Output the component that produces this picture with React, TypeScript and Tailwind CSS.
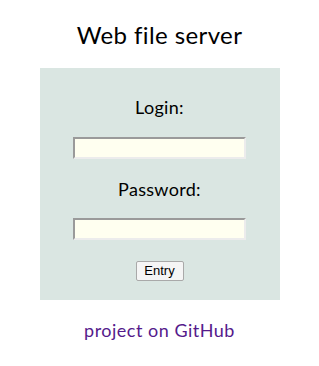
import React from 'react';

const App: React.FC = () => {
  return (
    <div className="w-[319px] h-[366px] bg-white flex flex-col items-center font-['Lato','Open_Sans',sans-serif] text-black">
      <h1 className="mt-[20px] text-[24px] leading-[30px] font-normal tracking-[0.4px]">Web file server</h1>

      <form
        className="mt-[18px] w-[240px] h-[232px] bg-[#dae6e2] flex flex-col items-center"
        onSubmit={(e) => e.preventDefault()}
      >
        <label className="mt-[27px] text-[18px] leading-[24px] tracking-[0.3px]">Login:</label>
        <input
          type="text"
          className="mt-[18px] w-[173px] h-[22px] bg-[#fffff0] border-2 border-t-[#9a9a9a] border-l-[#9a9a9a] border-b-[#ececec] border-r-[#ececec] outline-none"
        />
        <label className="mt-[18px] text-[18px] leading-[24px] tracking-[0.3px]">Password:</label>
        <input
          type="password"
          className="mt-[17px] w-[173px] h-[22px] bg-[#fffff0] border-2 border-t-[#9a9a9a] border-l-[#9a9a9a] border-b-[#ececec] border-r-[#ececec] outline-none"
        />
        <button
          type="submit"
          className="mt-[21px] w-[48px] h-[20px] bg-[#f5f5f5] border border-[#a9a9a9] rounded-[2px] text-[13px] leading-[18px] font-['Liberation_Sans',Arial,sans-serif]"
        >
          Entry
        </button>
      </form>

      <a href="#" className="mt-[18px] text-[18px] leading-[24px] tracking-[0.5px] text-[#551a8b]">
        project on GitHub
      </a>
    </div>
  );
};

export default App;
